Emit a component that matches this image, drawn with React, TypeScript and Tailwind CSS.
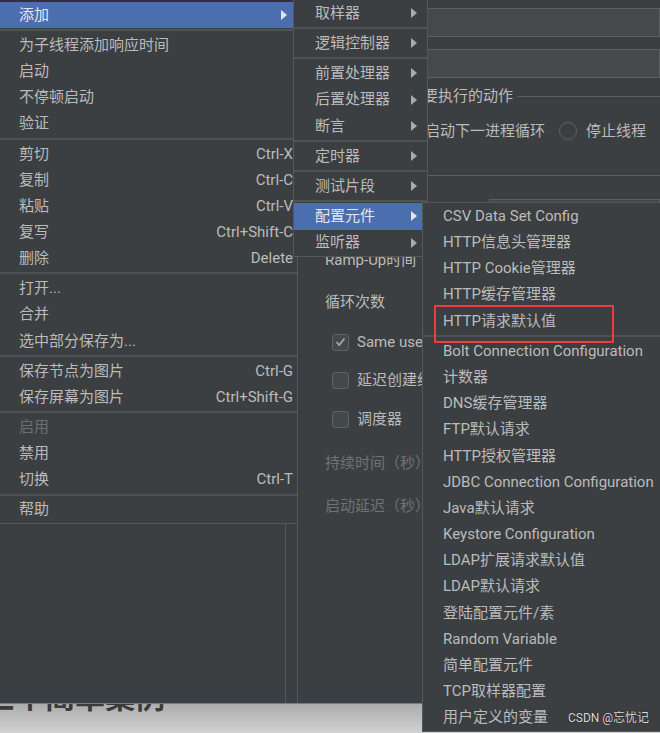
import React from "react";

type Item =
  | { label: string; shortcut?: string; arrow?: boolean; active?: boolean; disabled?: boolean }
  | "sep";

const mainItems: Item[] = [
  { label: "添加", arrow: true, active: true },
  "sep",
  { label: "为子线程添加响应时间" },
  { label: "启动" },
  { label: "不停顿启动" },
  { label: "验证" },
  "sep",
  { label: "剪切", shortcut: "Ctrl-X" },
  { label: "复制", shortcut: "Ctrl-C" },
  { label: "粘贴", shortcut: "Ctrl-V" },
  { label: "复写", shortcut: "Ctrl+Shift-C" },
  { label: "删除", shortcut: "Delete" },
  "sep",
  { label: "打开..." },
  { label: "合并" },
  { label: "选中部分保存为..." },
  "sep",
  { label: "保存节点为图片", shortcut: "Ctrl-G" },
  { label: "保存屏幕为图片", shortcut: "Ctrl+Shift-G" },
  "sep",
  { label: "启用", disabled: true },
  { label: "禁用" },
  { label: "切换", shortcut: "Ctrl-T" },
  "sep",
  { label: "帮助" },
];

const addItems: Item[] = [
  { label: "取样器", arrow: true },
  "sep",
  { label: "逻辑控制器", arrow: true },
  "sep",
  { label: "前置处理器", arrow: true },
  { label: "后置处理器", arrow: true },
  { label: "断言", arrow: true },
  "sep",
  { label: "定时器", arrow: true },
  "sep",
  { label: "测试片段", arrow: true },
  "sep",
  { label: "配置元件", arrow: true, active: true },
  { label: "监听器", arrow: true },
];

const configItems: Item[] = [
  { label: "CSV Data Set Config" },
  { label: "HTTP信息头管理器" },
  { label: "HTTP Cookie管理器" },
  { label: "HTTP缓存管理器" },
  { label: "HTTP请求默认值" },
  "sep",
  { label: "Bolt Connection Configuration" },
  { label: "计数器" },
  { label: "DNS缓存管理器" },
  { label: "FTP默认请求" },
  { label: "HTTP授权管理器" },
  { label: "JDBC Connection Configuration" },
  { label: "Java默认请求" },
  { label: "Keystore Configuration" },
  { label: "LDAP扩展请求默认值" },
  { label: "LDAP默认请求" },
  { label: "登陆配置元件/素" },
  { label: "Random Variable" },
  { label: "简单配置元件" },
  { label: "TCP取样器配置" },
  { label: "用户定义的变量" },
];

function Arrow({ light }: { light?: boolean }) {
  return (
    <svg width="6" height="10" viewBox="0 0 6 10" className="shrink-0">
      <polygon points="0,0 6,5 0,10" fill={light ? "#e2e6ec" : "#a9abad"} />
    </svg>
  );
}

function Separator() {
  return (
    <div className="flex h-[4px] items-center">
      <div className="h-[2px] w-full bg-[#4f5254]" />
    </div>
  );
}

function Rows({ items, rowH, pl, pr, arrowMr }: { items: Item[]; rowH: string; pl: string; pr: string; arrowMr: string }) {
  return (
    <>
      {items.map((it, i) =>
        it === "sep" ? (
          <Separator key={i} />
        ) : (
          <div
            key={i}
            className={`flex items-center whitespace-nowrap ${rowH} ${pl} ${pr} ${
              it.active ? "bg-[#4b6eaf] text-[#e4e8ee]" : it.disabled ? "text-[#6c6e70]" : "text-[#bbbbbb]"
            }`}
          >
            <span className="flex-1">{it.label}</span>
            {it.shortcut && <span>{it.shortcut}</span>}
            {it.arrow && (
              <span className={arrowMr}>
                <Arrow light={it.active} />
              </span>
            )}
          </div>
        )
      )}
    </>
  );
}

function Checkbox({ checked, label }: { checked?: boolean; label: string }) {
  return (
    <div className="flex h-[20px] items-center whitespace-nowrap pl-[34px]">
      <div className="flex h-[17px] w-[17px] shrink-0 items-center justify-center rounded-[3px] border border-[#5e6366] bg-[#43494a]">
        {checked && (
          <svg width="11" height="10" viewBox="0 0 11 10">
            <polyline points="1.5,5 4.2,8 9.5,1.5" fill="none" stroke="#a3a5a7" strokeWidth="1.8" />
          </svg>
        )}
      </div>
      <span className="ml-[8px]">{label}</span>
    </div>
  );
}

function Radio({ label }: { label: string }) {
  return (
    <div className="mr-[14px] flex shrink-0 items-center whitespace-nowrap">
      <div className="h-[18px] w-[18px] rounded-full border-[1.5px] border-[#5f6264] bg-[#3c3f41]" />
      <span className="ml-[9px]">{label}</span>
    </div>
  );
}

function RightPanel() {
  return (
    <div className="min-w-0 flex-1 overflow-hidden border-l border-[#555759] text-[#bbbbbb]">
      <div className="ml-[110px] mt-[8px] h-[29px] border border-[#5c5f61] bg-[#45494a]" />
      <div className="ml-[110px] mt-[12px] h-[29px] border border-[#5c5f61] bg-[#45494a]" />
      <div className="ml-[20px] mt-[8px] flex h-[20px] items-center">
        <span className="whitespace-nowrap">在取样器错误后要执行的动作</span>
        <div className="ml-[4px] h-px flex-1 bg-[#5c5f61]" />
      </div>
      <div className="ml-[29px] mt-[15px] flex h-[20px] items-center">
        <Radio label="继续" />
        <Radio label="启动下一进程循环" />
        <Radio label="停止线程" />
        <Radio label="停止测试" />
        <Radio label="立即停止测试" />
      </div>
      <div className="ml-[10px] mt-[34px] h-px bg-[#5c5f61]" />
      <div className="mt-[23px] flex h-[29px]">
        <div className="flex w-[191px] shrink-0 items-center pl-[27px]">线程数</div>
        <div className="flex-1 border border-[#5c5f61] bg-[#45494a]" />
      </div>
      <div className="mt-[22px] flex h-[20px] items-center whitespace-nowrap pl-[27px]">Ramp-Up时间（秒）</div>
      <div className="mt-[22px] flex h-[20px] items-center pl-[27px]">循环次数</div>
      <div className="mt-[20px]">
        <Checkbox checked label="Same user on each iteration" />
      </div>
      <div className="mt-[18px]">
        <Checkbox label="延迟创建线程直到需要" />
      </div>
      <div className="mt-[19px]">
        <Checkbox label="调度器" />
      </div>
      <div className="mt-[24px] flex h-[20px] items-center pl-[27px] text-[#707274]">持续时间（秒）</div>
      <div className="mt-[23px] flex h-[20px] items-center pl-[27px] text-[#707274]">启动延迟（秒）</div>
    </div>
  );
}

export default function App() {
  return (
    <div className="relative h-[733px] w-[660px] overflow-hidden bg-[#3c3f41] font-['Roboto','Noto_Sans_CJK_SC',sans-serif] text-[15px]">
      {/* app window behind the menus */}
      <div className="flex h-[704px] border-b border-[#3d8bd4]">
        <div className="w-[286px] shrink-0 border-r border-[#555759]" />
        <div className="w-[11px] shrink-0" />
        <RightPanel />
      </div>
      {/* article page under the window */}
      <div className="h-[29px] overflow-hidden bg-linear-to-b from-[#acacac] to-[#d2d2d2]">
        <div className="ml-[-15px] mt-[-21px] whitespace-nowrap text-[30px] font-bold leading-[30px] text-[#3a3a3a]">
          三个简单案例
        </div>
      </div>

      {/* context menu */}
      <div className="absolute left-0 top-0 w-[298px] border-b border-r border-t-2 border-[#555759] border-t-[#303234] bg-[#3c3f41]">
        <Rows items={mainItems} rowH="h-[26.15px]" pl="pl-[19px]" pr="pr-[4px]" arrowMr="mr-[6px]" />
      </div>

      {/* 添加 submenu */}
      <div className="absolute left-[293px] top-[-1px] w-[135px] border border-[#555759] bg-[#3c3f41]">
        <Rows items={addItems} rowH="h-[26.2px]" pl="pl-[21px]" pr="pr-0" arrowMr="mr-[10px]" />
      </div>

      {/* 配置元件 submenu */}
      <div className="absolute left-[422px] top-[202px] w-[260px] border border-[#555759] bg-[#3c3f41]">
        <Rows items={configItems} rowH="h-[26.2px]" pl="pl-[20px]" pr="pr-0" arrowMr="" />
      </div>

      {/* highlight annotation */}
      <div className="absolute left-[434px] top-[305px] h-[38px] w-[180px] border-2 border-[#f23c3c]" />

      {/* watermark */}
      <div className="absolute left-[568px] top-[710px] text-[12px] leading-[16px] text-[#dcdcdc] [text-shadow:0_0_1px_#000]">
        CSDN @忘忧记
      </div>
    </div>
  );
}
